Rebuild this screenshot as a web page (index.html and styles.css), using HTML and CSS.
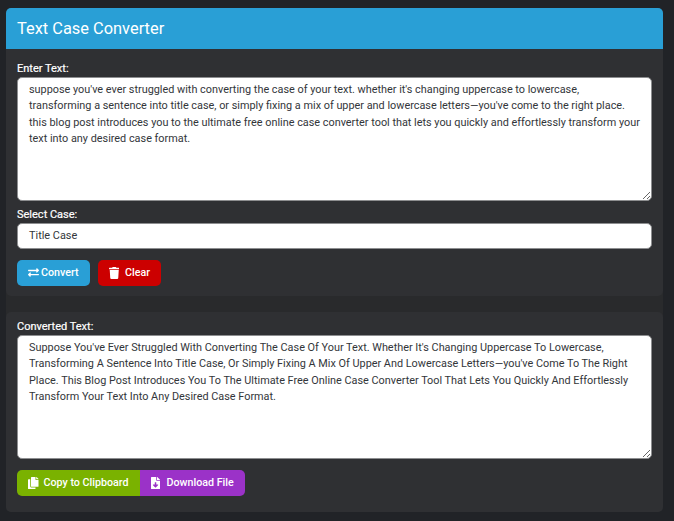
FILE: index.html
```html
<!DOCTYPE html>
<html lang="en">
<head>
    <meta charset="UTF-8">
    <meta name="viewport" content="width=device-width, initial-scale=1.0">
    <title>Text Case Converter</title>
    <link rel="stylesheet" href="styles.css">
</head>
<body>
    <div class="tool">
        <section class="card card-input">
            <h1 class="card-title">Text Case Converter</h1>
            <div class="card-body">
                <label class="field-label" for="inputText">Enter Text:</label>
                <textarea class="text-box" id="inputText">suppose you've ever struggled with converting the case of your text. whether it's changing uppercase to lowercase, transforming a sentence into title case, or simply fixing a mix of upper and lowercase letters—you've come to the right place. this blog post introduces you to the ultimate free online case converter tool that lets you quickly and effortlessly transform your text into any desired case format.</textarea>
                <label class="field-label label-select" for="caseSelect">Select Case:</label>
                <div class="select-box" id="caseSelect">Title Case</div>
                <div class="actions">
                    <button class="btn btn-blue">
                        <svg class="icon icon-swap" viewBox="0 0 512 512"><path fill="currentColor" d="M0 168v-16c0-13 11-24 24-24h360V80c0-21 26-32 41-17l80 80c9 9 9 25 0 34l-80 80c-15 15-41 4-41-17v-48H24c-13 0-24-11-24-24zm488 152H128v-48c0-21-26-32-41-17L7 335c-9 9-9 25 0 34l80 80c15 15 41 4 41-17v-48h360c13 0 24-11 24-24v-16c0-13-11-24-24-24z"/></svg>
                        Convert
                    </button>
                    <button class="btn btn-red">
                        <svg class="icon" viewBox="0 0 448 512"><path fill="currentColor" d="M432 32H312l-9-19A24 24 0 0 0 281 0H167a24 24 0 0 0-22 13l-9 19H16A16 16 0 0 0 0 48v32a16 16 0 0 0 16 16h416a16 16 0 0 0 16-16V48a16 16 0 0 0-16-16zM53 467a48 48 0 0 0 48 45h246a48 48 0 0 0 48-45l21-339H32z"/></svg>
                        Clear
                    </button>
                </div>
            </div>
        </section>

        <section class="card card-output">
            <div class="card-body">
                <label class="field-label" for="outputText">Converted Text:</label>
                <textarea class="text-box" id="outputText">Suppose You've Ever Struggled With Converting The Case Of Your Text. Whether It's Changing Uppercase To Lowercase, Transforming A Sentence Into Title Case, Or Simply Fixing A Mix Of Upper And Lowercase Letters—you've Come To The Right Place. This Blog Post Introduces You To The Ultimate Free Online Case Converter Tool That Lets You Quickly And Effortlessly Transform Your Text Into Any Desired Case Format.</textarea>
                <div class="actions actions-joined">
                    <button class="btn btn-green">
                        <svg class="icon" viewBox="0 0 448 512"><path fill="currentColor" d="M320 448v40c0 13-11 24-24 24H24c-13 0-24-11-24-24V120c0-13 11-24 24-24h72v296c0 31 25 56 56 56h168zm0-344V0H152c-13 0-24 11-24 24v368c0 13 11 24 24 24h272c13 0 24-11 24-24V128H344c-13 0-24-11-24-24zm121-31L375 7c-4-4-11-7-17-7h-6v96h96v-6c0-6-3-13-7-17z"/></svg>
                        Copy to Clipboard
                    </button>
                    <button class="btn btn-purple">
                        <svg class="icon" viewBox="0 0 384 512"><path fill="currentColor" d="M224 136V0H24C11 0 0 11 0 24v464c0 13 11 24 24 24h336c13 0 24-11 24-24V160H248c-13 0-24-11-24-24zm76 212l-96 96c-7 6-17 6-24 0l-96-96c-10-10-3-28 12-28h65v-80c0-9 7-16 16-16h32c9 0 16 7 16 16v80h65c15 0 22 18 10 28zM377 105L279 7c-4-4-11-7-17-7h-6v128h128v-6c0-6-3-13-7-17z"/></svg>
                        Download File
                    </button>
                </div>
            </div>
        </section>
    </div>
</body>
</html>
```

FILE: styles.css
```css
* {
    box-sizing: border-box;
}
html, body {
    height: 100%;
}
body {
    margin: 0;
    padding: 8px 11px 9px 6px;
    overflow: hidden;
    background-color: #212327;
    font-family: Roboto, "Liberation Sans", sans-serif;
    font-size: 12px;
    color: #fff;
}
.tool {
    background-color: #292a2c;
    border-radius: 5px;
}
.card {
    background-color: #2f3033;
    border-radius: 5px;
}
.card-input {
    height: 288px;
}
.card-output {
    height: 200px;
    margin-top: 16px;
}
.card-title {
    margin: 0;
    height: 41px;
    padding: 0 11px;
    background-color: #299fd6;
    border-radius: 5px 5px 0 0;
    font-size: 16.4px;
    font-weight: 400;
    line-height: 41px;
}
.card-body {
    padding: 11px 11px 0;
}
.card-output .card-body {
    padding-top: 6px;
}
.field-label {
    display: block;
    height: 17px;
    line-height: 18px;
    font-size: 11px;
    -webkit-text-stroke: 0.2px #fff;
}
.label-select {
    margin-top: 5px;
}
.text-box {
    display: block;
    width: 100%;
    height: 124px;
    padding: 4px 8px 3px 11px;
    background-color: #fff;
    border: 1px solid #8d8e90;
    border-radius: 5px;
    outline: none;
    font-family: inherit;
    font-size: 10.86px;
    line-height: 16.3px;
    color: #33363a;
    overflow: hidden;
}
.select-box {
    height: 26px;
    padding: 0 11px;
    background-color: #fff;
    border: 1px solid #8d8e90;
    border-radius: 5px;
    font-size: 10.9px;
    line-height: 24px;
    color: #33363a;
}
.actions {
    display: flex;
    gap: 8px;
    margin-top: 11px;
}
.actions-joined {
    gap: 0;
}
.btn {
    display: flex;
    align-items: center;
    gap: 2px;
    height: 26px;
    padding: 0 11px 1px;
    border: none;
    border-radius: 5px;
    font-family: inherit;
    font-size: 10.7px;
    font-weight: 500;
    color: #fff;
}
.icon {
    height: 12px;
    width: auto;
}
.icon-swap {
    height: 11px;
}
.btn-blue {
    background-color: #299fd6;
}
.btn-red {
    gap: 6px;
    background-color: #cc0000;
}
.btn-green {
    gap: 5px;
    background-color: #7ab200;
    border-radius: 5px 0 0 5px;
}
.btn-purple {
    gap: 7px;
    background-color: #9b32c8;
    border-radius: 0 5px 5px 0;
}
```
